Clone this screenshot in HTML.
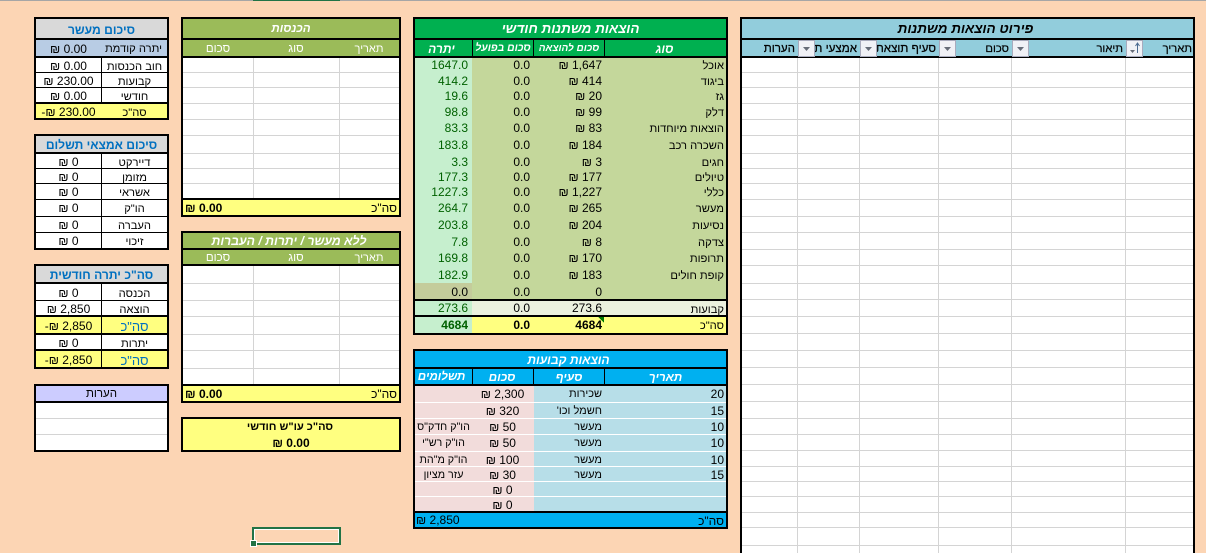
<!DOCTYPE html>
<html lang="he"><head><meta charset="utf-8"><title>Budget</title>
<style>
html,body{margin:0;padding:0;width:1206px;height:553px;overflow:hidden;background:#fcd5b4}
svg{position:absolute;left:0;top:0}
.t{position:absolute;height:16px;line-height:16px;font:12px/16px "Liberation Sans","Noto Sans CJK SC",sans-serif;white-space:nowrap;overflow:hidden;color:#000;direction:rtl}
.n{direction:ltr}
.a{left:36px;width:65px;text-align:center}
.b{left:102px;width:65px;text-align:center;font-size:11.2px;margin-top:1px}
.w{left:36px;width:131px;text-align:center}
.h{font-weight:bold;font-size:12.1px;color:#0070c0}
.ttl{font-weight:bold;font-style:italic;color:#fff}
.i1{left:339px;width:60px;text-align:center;color:#fff;font-size:11px}
.i2{left:253px;width:86px;text-align:center;color:#fff;font-size:11.5px}
.i3{left:183px;width:70px;text-align:center;color:#fff;font-size:11.5px}
.m1{left:415px;width:53px;text-align:right;direction:ltr;color:#006100}
.m2{left:472px;width:58px;text-align:right;direction:ltr}
.m3{left:533px;width:69px;text-align:right;direction:ltr}
.m4{left:604px;width:120px;text-align:right;font-size:11.2px;margin-top:1px}
.f1{left:604px;width:120px;text-align:right;direction:ltr}
.f2{left:533px;width:69px;text-align:right;font-size:11px}
.f3{left:472px;width:61px;text-align:center;direction:ltr}
.f4{left:415px;width:57px;text-align:center;font-size:10.7px}
.hw{color:#fff;font-weight:bold;font-style:italic;text-align:center;font-size:11.8px}
.d{text-align:right;top:41px;font-size:11.2px;-webkit-text-stroke:.2px #000}
.e{text-align:right;top:41px;font-size:11.6px;-webkit-text-stroke:.25px #000}
</style></head><body>
<svg width="1206" height="553" shape-rendering="crispEdges">
<rect x="0" y="0" width="1206" height="1" fill="#a6a6a6"/><rect x="253" y="0" width="87" height="1" fill="#217346"/>
<!-- panel 1 -->
<rect x="34" y="17" width="135" height="103" fill="#000"/>
<rect x="36" y="19" width="131" height="19" fill="#d9d9d9"/>
<rect x="36" y="40" width="131" height="16" fill="#b8cce4"/>
<rect x="36" y="58" width="131" height="14" fill="#fff"/><rect x="36" y="73" width="131" height="14" fill="#fff"/><rect x="36" y="88" width="131" height="14" fill="#fff"/>
<rect x="101" y="58" width="1" height="44" fill="#000"/>
<rect x="36" y="104" width="131" height="14" fill="#ffff80"/>
<!-- panel 2 -->
<rect x="34" y="134" width="135" height="116" fill="#000"/>
<rect x="36" y="136" width="131" height="16" fill="#d9d9d9"/>
<rect x="36" y="154" width="131" height="94" fill="#fff"/>
<path d="M36 168.5H167M36 183.5H167M36 199.5H167M36 216.5H167M36 232.5H167M101.5 154V248" stroke="#000" stroke-width="1"/>
<!-- panel 3 -->
<rect x="34" y="264" width="135" height="105" fill="#000"/>
<rect x="36" y="266" width="131" height="16" fill="#d9d9d9"/>
<rect x="36" y="284" width="131" height="16" fill="#fff"/><rect x="36" y="301" width="131" height="14" fill="#fff"/>
<rect x="36" y="317" width="131" height="16" fill="#ffff80"/>
<rect x="36" y="335" width="131" height="14" fill="#fff"/>
<rect x="36" y="351" width="131" height="16" fill="#ffff80"/>
<rect x="101" y="284" width="1" height="83" fill="#000"/>
<!-- panel 4 -->
<rect x="34" y="384" width="135" height="68" fill="#000"/>
<rect x="36" y="386" width="131" height="15" fill="#ccccff"/>
<rect x="36" y="403" width="131" height="47" fill="#fff"/>
<path d="M36 418.5H167M36 434.5H167" stroke="#d4d4d4"/>
<!-- incomes -->
<rect x="181" y="17" width="220" height="200" fill="#000"/>
<rect x="183" y="19" width="216" height="19" fill="#9bbb59"/>
<rect x="183" y="40" width="216" height="16" fill="#9bbb59"/>
<rect x="183" y="58" width="216" height="140" fill="#fff"/>
<path d="M183 72.5H399M183 87.5H399M183 103.5H399M183 119.5H399M183 135.5H399M183 153.5H399M183 168.5H399M183 183.5H399M253.5 58V198M339.5 58V198" stroke="#d4d4d4"/>
<rect x="183" y="200" width="216" height="15" fill="#ffff80"/>
<!-- no tithe -->
<rect x="181" y="231" width="220" height="172" fill="#000"/>
<rect x="183" y="233" width="216" height="15" fill="#9bbb59"/>
<rect x="183" y="250" width="216" height="14" fill="#9bbb59"/>
<rect x="183" y="266" width="216" height="118" fill="#fff"/>
<path d="M183 283.5H399M183 300.5H399M183 316.5H399M183 334.5H399M183 350.5H399M183 368.5H399M253.5 266V384M339.5 266V384" stroke="#d4d4d4"/>
<rect x="183" y="386" width="216" height="15" fill="#ffff80"/>
<!-- box -->
<rect x="181" y="417" width="220" height="35" fill="#000"/>
<rect x="183" y="419" width="216" height="31" fill="#ffff80"/>
<!-- selection -->
<rect x="252" y="527" width="89" height="18" fill="#217346"/>
<rect x="254" y="529" width="85" height="14" fill="#fff"/>
<rect x="255" y="530" width="83" height="12" fill="#fcd5b4"/>
<rect x="250" y="540" width="7" height="7" fill="#fff"/><rect x="251" y="541" width="5" height="5" fill="#217346"/>
<!-- monthly -->
<rect x="413" y="17" width="315" height="318" fill="#000"/>
<rect x="415" y="19" width="311" height="19" fill="#00b050"/>
<rect x="415" y="40" width="57" height="16" fill="#00b050"/><rect x="473" y="40" width="60" height="16" fill="#00b050"/><rect x="534" y="40" width="70" height="16" fill="#00b050"/><rect x="605" y="40" width="121" height="16" fill="#00b050"/>
<rect x="415" y="58" width="311" height="241" fill="#c4d79b"/>
<rect x="415" y="58" width="57" height="225" fill="#c6efce"/>
<rect x="415" y="283" width="57" height="16" fill="#c4cc9b"/>
<rect x="415" y="301" width="311" height="14" fill="#ebf1de"/>
<rect x="415" y="301" width="57" height="14" fill="#c6efce"/>
<rect x="415" y="317" width="311" height="16" fill="#ffff80"/>
<rect x="415" y="317" width="57" height="16" fill="#c6efce"/>
<!-- fixed -->
<rect x="413" y="349" width="315" height="180" fill="#000"/>
<rect x="415" y="351" width="311" height="16" fill="#00b0f0"/>
<rect x="415" y="369" width="57" height="15" fill="#00b0f0"/><rect x="473" y="369" width="60" height="15" fill="#00b0f0"/><rect x="534" y="369" width="70" height="15" fill="#00b0f0"/><rect x="605" y="369" width="121" height="15" fill="#00b0f0"/>
<rect x="415" y="386" width="118" height="125" fill="#f2dcdb"/>
<rect x="534" y="386" width="192" height="125" fill="#b7dee8"/><rect x="533" y="386" width="1" height="125" fill="#f2dcdb"/>
<path d="M415 402.5H726M415 418.5H726M415 434.5H726M415 451.5H726M415 466.5H726M415 481.5H726M415 496.5H726" stroke="#fff"/>
<rect x="415" y="513" width="311" height="14" fill="#00b0f0"/>
<!-- detail -->
<rect x="740" y="17" width="455" height="536" fill="#000"/>
<rect x="742" y="19" width="451" height="19" fill="#92cddc"/>
<rect x="742" y="40" width="451" height="16" fill="#92cddc"/>
<rect x="742" y="58" width="451" height="495" fill="#fff"/>
<path d="M742 72.5H1193M742 87.5H1193M742 103.5H1193M742 119.5H1193M742 135.5H1193M742 153.5H1193M742 168.5H1193M742 183.5H1193M742 199.5H1193M742 216.5H1193M742 232.5H1193M742 249.5H1193M742 265.5H1193M742 283.5H1193M742 299.5H1193M742 316.5H1193M742 333.5H1193M742 350.5H1193M742 367.5H1193M742 384.5H1193M742 401.5H1193M742 418.5H1193M742 434.5H1193M742 450.5H1193M742 466.5H1193M742 481.5H1193M742 496.5H1193M742 512.5H1193M742 527.5H1193M742 545.5H1193M797.5 58V553M859.5 58V553M938.5 58V553M1011.5 58V553M1125.5 58V553" stroke="#d4d4d4"/>
<g fill="#f0f1f6" stroke="#a8abbd">
<rect x="798.5" y="40.5" width="16" height="16"/><rect x="860.5" y="40.5" width="16" height="16"/><rect x="939.5" y="40.5" width="16" height="16"/><rect x="1012.5" y="40.5" width="16" height="16"/><rect x="1126.5" y="40.5" width="16" height="16"/>
</g>
<g fill="#666c78" shape-rendering="auto">
<polygon points="803,47 810,47 806.5,51"/><polygon points="865,47 872,47 868.5,51"/><polygon points="944,47 951,47 947.5,51"/><polygon points="1017,47 1024,47 1020.5,51"/>
<polygon points="1130,50 1135,50 1132.5,53"/>
</g>
<path d="M1137.5 44V53M1135.5 46L1137.5 43L1139.5 46" stroke="#4a6a90" fill="none" shape-rendering="auto"/>
</svg>

<!-- panel 1 -->
<div class="t w h" style="top:22px">סיכום מעשר</div>
<div class="t b" style="top:40px;width:60px;text-align:right">יתרה קודמת</div>
<div class="t a n" style="top:41px">₪ 0.00</div>
<div class="t b" style="top:58px">חוב הכנסות</div><div class="t a n" style="top:58px">₪ 0.00</div>
<div class="t b" style="top:73px">קבועות</div><div class="t a n" style="top:73px">₪ 230.00</div>
<div class="t b" style="top:88px">חודשי</div><div class="t a n" style="top:88px">₪ 0.00</div>
<div class="t b" style="top:104px">סה"כ</div><div class="t a n" style="top:104px">-₪ 230.00</div>
<!-- panel 2 -->
<div class="t w h" style="top:137px">סיכום אמצאי תשלום</div>
<div class="t b" style="top:154px">דיירקט</div><div class="t a n" style="top:154px">₪ 0</div>
<div class="t b" style="top:169px">מזומן</div><div class="t a n" style="top:169px">₪ 0</div>
<div class="t b" style="top:184px">אשראי</div><div class="t a n" style="top:184px">₪ 0</div>
<div class="t b" style="top:200px">הו"ק</div><div class="t a n" style="top:200px">₪ 0</div>
<div class="t b" style="top:217px">העברה</div><div class="t a n" style="top:217px">₪ 0</div>
<div class="t b" style="top:233px">זיכוי</div><div class="t a n" style="top:233px">₪ 0</div>
<!-- panel 3 -->
<div class="t w h" style="top:267px">סה"כ יתרה חודשית</div>
<div class="t b" style="top:285px">הכנסה</div><div class="t a n" style="top:285px">₪ 0</div>
<div class="t b" style="top:301px">הוצאה</div><div class="t a n" style="top:301px">₪ 2,850</div>
<div class="t b" style="top:318px;color:#0070c0;font-size:13px">סה"כ</div><div class="t a n" style="top:318px">-₪ 2,850</div>
<div class="t b" style="top:335px">יתרות</div><div class="t a n" style="top:335px">₪ 0</div>
<div class="t b" style="top:352px;color:#0070c0;font-size:13px">סה"כ</div><div class="t a n" style="top:352px">-₪ 2,850</div>
<div class="t w" style="top:386px;font-size:11.5px">הערות</div>
<!-- incomes -->
<div class="t ttl" style="left:183px;width:216px;text-align:center;top:21px;font-size:11.6px">הכנסות</div>
<div class="t i1" style="top:41px">תאריך</div><div class="t i2" style="top:41px">סוג</div><div class="t i3" style="top:41px">סכום</div>
<div class="t" style="left:340px;width:57px;text-align:right;top:200px">סה"כ</div>
<div class="t n" style="left:185px;width:60px;top:200px;font-weight:bold">₪ 0.00</div>
<!-- no tithe -->
<div class="t ttl" style="left:181px;width:216px;text-align:center;top:233px;font-size:12.3px">ללא מעשר / יתרות / העברות</div>
<div class="t i1" style="top:250px">תאריך</div><div class="t i2" style="top:250px">סוג</div><div class="t i3" style="top:250px">סכום</div>
<div class="t" style="left:340px;width:57px;text-align:right;top:386px">סה"כ</div>
<div class="t n" style="left:185px;width:60px;top:386px;font-weight:bold">₪ 0.00</div>
<!-- box -->
<div class="t" style="left:182px;width:216px;text-align:center;top:419px;font-weight:bold;font-size:11px">סה"כ עו"ש חודשי</div>
<div class="t n" style="left:183px;width:216px;text-align:center;top:435px;font-weight:bold">₪ 0.00</div>
<!-- monthly -->
<div class="t ttl" style="left:415px;width:311px;text-align:center;top:21px;font-size:13.5px">הוצאות משתנות חודשי</div>
<div class="t ttl" style="left:413px;width:57px;text-align:center;top:41px;font-size:12px">יתרה</div>
<div class="t ttl" style="left:473px;width:60px;text-align:center;top:41px;font-size:10.4px">סכום בפועל</div>
<div class="t ttl" style="left:534px;width:70px;text-align:center;top:41px;font-size:10px">סכום להוצאה</div>
<div class="t ttl" style="left:604px;width:121px;text-align:center;top:41px;font-size:12px">סוג</div>

<div class="t m4" style="top:57px">אוכל</div><div class="t m3" style="top:57px">₪ 1,647</div><div class="t m2" style="top:57px">0.0</div><div class="t m1" style="top:57px">1647.0</div>
<div class="t m4" style="top:73px">ביגוד</div><div class="t m3" style="top:73px">₪ 414</div><div class="t m2" style="top:73px">0.0</div><div class="t m1" style="top:73px">414.2</div>
<div class="t m4" style="top:88px">גז</div><div class="t m3" style="top:88px">₪ 20</div><div class="t m2" style="top:88px">0.0</div><div class="t m1" style="top:88px">19.6</div>
<div class="t m4" style="top:104px">דלק</div><div class="t m3" style="top:104px">₪ 99</div><div class="t m2" style="top:104px">0.0</div><div class="t m1" style="top:104px">98.8</div>
<div class="t m4" style="top:120px">הוצאות מיוחדות</div><div class="t m3" style="top:120px">₪ 83</div><div class="t m2" style="top:120px">0.0</div><div class="t m1" style="top:120px">83.3</div>
<div class="t m4" style="top:137px">השכרה רכב</div><div class="t m3" style="top:137px">₪ 184</div><div class="t m2" style="top:137px">0.0</div><div class="t m1" style="top:137px">183.8</div>
<div class="t m4" style="top:154px">חגים</div><div class="t m3" style="top:154px">₪ 3</div><div class="t m2" style="top:154px">0.0</div><div class="t m1" style="top:154px">3.3</div>
<div class="t m4" style="top:169px">טיולים</div><div class="t m3" style="top:169px">₪ 177</div><div class="t m2" style="top:169px">0.0</div><div class="t m1" style="top:169px">177.3</div>
<div class="t m4" style="top:184px">כללי</div><div class="t m3" style="top:184px">₪ 1,227</div><div class="t m2" style="top:184px">0.0</div><div class="t m1" style="top:184px">1227.3</div>
<div class="t m4" style="top:200px">מעשר</div><div class="t m3" style="top:200px">₪ 265</div><div class="t m2" style="top:200px">0.0</div><div class="t m1" style="top:200px">264.7</div>
<div class="t m4" style="top:217px">נסיעות</div><div class="t m3" style="top:217px">₪ 204</div><div class="t m2" style="top:217px">0.0</div><div class="t m1" style="top:217px">203.8</div>
<div class="t m4" style="top:234px">צדקה</div><div class="t m3" style="top:234px">₪ 8</div><div class="t m2" style="top:234px">0.0</div><div class="t m1" style="top:234px">7.8</div>
<div class="t m4" style="top:250px">תרופות</div><div class="t m3" style="top:250px">₪ 170</div><div class="t m2" style="top:250px">0.0</div><div class="t m1" style="top:250px">169.8</div>
<div class="t m4" style="top:267px">קופת חולים</div><div class="t m3" style="top:267px">₪ 183</div><div class="t m2" style="top:267px">0.0</div><div class="t m1" style="top:267px">182.9</div>
<div class="t m3" style="top:284px">0</div><div class="t m2" style="top:284px">0.0</div><div class="t m1" style="top:284px;color:#000">0.0</div>
<div class="t m4" style="top:301px">קבועות</div><div class="t m3" style="top:300px">273.6</div><div class="t m2" style="top:300px">0.0</div><div class="t m1" style="top:300px">273.6</div>
<div class="t m4" style="top:317px">סה"כ</div><div class="t m3" style="top:317px;font-weight:bold">4684</div><div class="t m2" style="top:317px;font-weight:bold">0.0</div><div class="t m1" style="top:317px;font-weight:bold">4684</div>
<svg width="1206" height="553"><polygon points="598,317 604,317 604,323" fill="#007a00" shape-rendering="crispEdges"/></svg>
<!-- fixed -->
<div class="t ttl" style="left:413px;width:311px;text-align:center;top:352px;font-size:12.1px">הוצאות קבועות</div>
<div class="t hw" style="left:605px;width:121px;top:369px">תאריך</div>
<div class="t hw" style="left:534px;width:70px;top:369px">סעיף</div>
<div class="t hw" style="left:472px;width:60px;top:369px">סכום</div>
<div class="t hw" style="left:413px;width:57px;top:369px;font-size:11.6px">תשלומים</div>
<div class="t f1" style="top:386px">20</div><div class="t f2" style="top:386px">שכירות</div><div class="t f3" style="top:386px">₪ 2,300</div>
<div class="t f1" style="top:403px">15</div><div class="t f2" style="top:403px">חשמל וכו'</div><div class="t f3" style="top:403px">₪ 320</div>
<div class="t f1" style="top:419px">10</div><div class="t f2" style="top:419px">מעשר</div><div class="t f3" style="top:419px">₪ 50</div><div class="t f4" style="top:419px">הו"ק חדק"ס</div>
<div class="t f1" style="top:435px">10</div><div class="t f2" style="top:435px">מעשר</div><div class="t f3" style="top:435px">₪ 50</div><div class="t f4" style="top:435px">הו"ק רש"י</div>
<div class="t f1" style="top:452px">10</div><div class="t f2" style="top:452px">מעשר</div><div class="t f3" style="top:452px">₪ 100</div><div class="t f4" style="top:452px">הו"ק מ"הת</div>
<div class="t f1" style="top:467px">15</div><div class="t f2" style="top:467px">מעשר</div><div class="t f3" style="top:467px">₪ 30</div><div class="t f4" style="top:467px">עזר מציון</div>
<div class="t f3" style="top:482px">₪ 0</div>
<div class="t f3" style="top:497px">₪ 0</div>
<div class="t" style="left:604px;width:120px;text-align:right;top:513px">סה"כ</div>
<div class="t n" style="left:416px;width:80px;top:512px">₪ 2,850</div>
<!-- detail -->
<div class="t ttl" style="left:740px;width:451px;text-align:center;top:21px;font-size:13.5px;color:#000">פירוט הוצאות משתנות</div>
<div class="t d" style="left:1143px;width:49px">תאריך</div>
<div class="t d" style="left:1029px;width:94px">תיאור</div>
<div class="t d" style="left:956px;width:53px">סכום</div>
<div class="t e" style="left:877px;width:59px">סעיף תוצאת</div>
<div class="t e" style="left:815px;width:42px">אמצעי תשלום</div>
<div class="t e" style="left:750px;width:45px">הערות</div>
</body></html>
